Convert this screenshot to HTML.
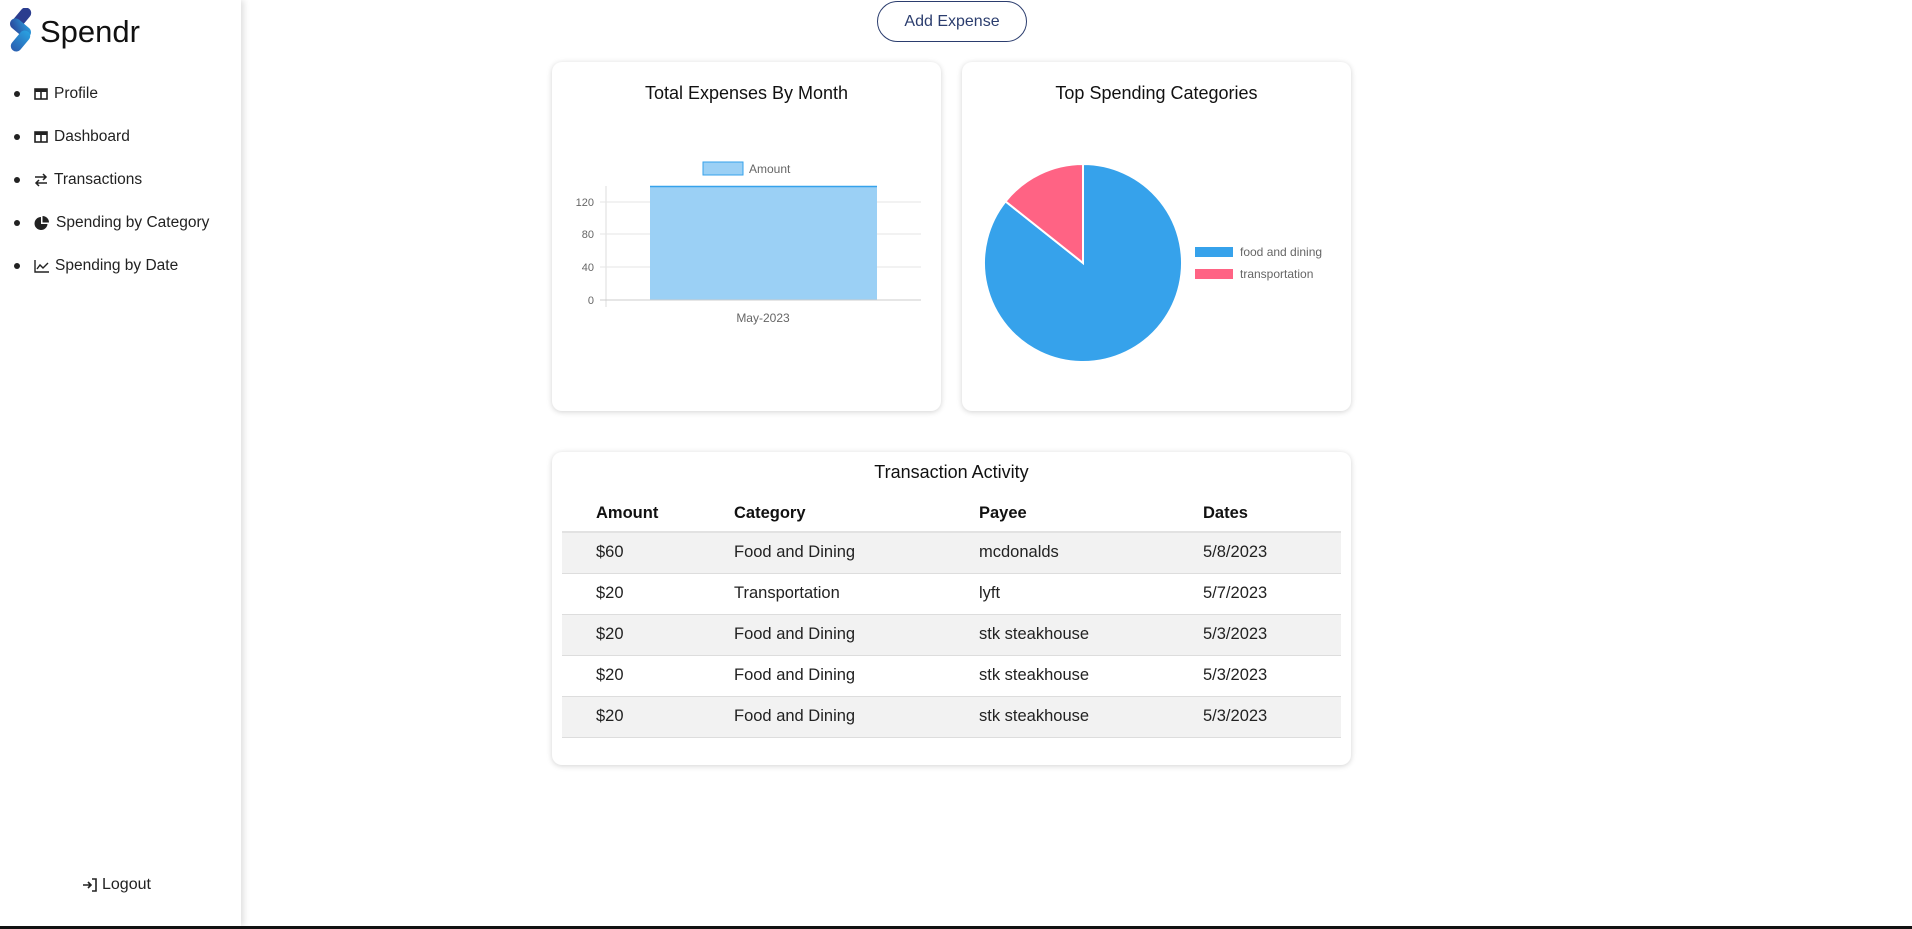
<!DOCTYPE html>
<html><head><meta charset="utf-8"><style>
*{box-sizing:border-box;margin:0;padding:0}
body{width:1912px;height:929px;position:relative;background:#fff;font-family:"Liberation Sans",sans-serif;color:#222;overflow:hidden}
.side{position:absolute;left:0;top:0;width:241px;height:926px;background:#fff;box-shadow:3px 0 6px rgba(0,0,0,0.12);z-index:2}
.abs{position:absolute}
.nav{position:absolute;left:14px;font-size:15.5px;color:#222;display:flex;align-items:center}
.nav .b{width:6px;height:6px;border-radius:50%;background:#222;margin-right:14px}
.nav svg{margin-right:6px}
.card{position:absolute;background:#fff;border-radius:10px;box-shadow:0 1px 6px rgba(0,0,0,0.18)}
.ct{position:absolute;left:0;right:0;text-align:center;font-size:18px;color:#111}
table{position:absolute;left:10px;top:43px;width:779px;border-collapse:collapse;font-size:16.5px}
th{text-align:left;font-weight:bold;height:37px;border-bottom:2px solid #e2e2e2;color:#111}
td{height:41px;border-bottom:1px solid #ddd;color:#222}
tr.g td{background:#f2f2f2}
th:first-child,td:first-child{padding-left:34px;width:172px}
.c2{width:245px}.c3{width:224px}
</style></head><body>
<div class="side">
  <svg class="abs" style="left:7px;top:8px" width="28" height="46" viewBox="0 0 28 46">
    <defs><linearGradient id="lg" x1="0" y1="0" x2="1" y2="1"><stop offset="0" stop-color="#2a3f94"/><stop offset="1" stop-color="#2aa0e0"/></linearGradient>
    <linearGradient id="lg2" x1="0" y1="0" x2="0" y2="1"><stop offset="0" stop-color="#2aa0e0"/><stop offset="1" stop-color="#2a5fb0"/></linearGradient></defs>
    <rect x="9" y="-2" width="11" height="24" rx="5.5" transform="rotate(40 14.5 10)" fill="#2b3d8f"/>
    <rect x="8" y="8" width="11" height="24" rx="5.5" transform="rotate(-50 13.5 20)" fill="url(#lg)"/>
    <rect x="8" y="21" width="11" height="24" rx="5.5" transform="rotate(40 13.5 33)" fill="url(#lg2)"/>
  </svg>
  <div class="abs" style="left:40px;top:14px;font-size:31px;color:#111">Spendr</div>
  <div class="nav" style="top:85px"><span class="b"></span><svg width="14" height="12" viewBox="0 0 14 12"><rect x="1" y="1" width="12" height="10" fill="none" stroke="#222" stroke-width="1.6"/><rect x="1" y="1" width="12" height="3" fill="#222"/><line x1="7" y1="1" x2="7" y2="11" stroke="#222" stroke-width="1.6"/></svg>Profile</div>
  <div class="nav" style="top:128px"><span class="b"></span><svg width="14" height="12" viewBox="0 0 14 12"><rect x="1" y="1" width="12" height="10" fill="none" stroke="#222" stroke-width="1.6"/><rect x="1" y="1" width="12" height="3" fill="#222"/><line x1="7" y1="1" x2="7" y2="11" stroke="#222" stroke-width="1.6"/></svg>Dashboard</div>
  <div class="nav" style="top:171px"><span class="b"></span><svg width="14" height="14" viewBox="0 0 14 14" fill="none" stroke="#222" stroke-width="1.5"><path d="M1 4h11M9 1l3 3-3 3M13 10H2M5 7l-3 3 3 3"/></svg>Transactions</div>
  <div class="nav" style="top:214px"><span class="b"></span><svg width="16" height="15" viewBox="0 0 16 15"><path d="M7 1A6.5 6.5 0 1 0 13.5 8H7z" fill="#222"/><path d="M8.5 0v6.5H15A6.5 6.5 0 0 0 8.5 0z" fill="#222"/></svg>Spending by Category</div>
  <div class="nav" style="top:257px"><span class="b"></span><svg width="15" height="13" viewBox="0 0 15 13" fill="none" stroke="#222" stroke-width="1.4"><path d="M1 0v12h14M3 9l3-4 3 3 5-5"/></svg>Spending by Date</div>
  <div class="abs" style="left:82px;top:876px;font-size:16px;display:flex;align-items:center"><svg width="16" height="14" viewBox="0 0 16 14" fill="none" stroke="#222" stroke-width="1.6" style="margin-right:4px"><path d="M1 7h8M6 4l3 3-3 3M10 1h4v12h-4"/></svg>Logout</div>
</div>
<div class="abs" style="left:0;top:926px;width:1912px;height:3px;background:#111;z-index:3"></div>

<div class="abs" style="left:877px;top:1px;width:150px;height:41px;border:1.5px solid #2b3d6e;border-radius:21px;text-align:center;line-height:40px;font-size:16px;color:#2b3d6e">Add Expense</div>

<div class="card" style="left:552px;top:62px;width:389px;height:349px">
  <div class="ct" style="top:21px">Total Expenses By Month</div>
  <svg class="abs" style="left:0;top:0" width="389" height="349" font-family="Liberation Sans, sans-serif" font-size="11" fill="#666">
    <rect x="151" y="100" width="40" height="13" fill="#9bd0f5" stroke="#36a2eb" stroke-width="1"/>
    <text x="197" y="111" font-size="12">Amount</text>
    <line x1="54" y1="124" x2="54" y2="245" stroke="#ddd"/>
    <line x1="48" y1="140" x2="369" y2="140" stroke="#e5e5e5"/>
    <line x1="48" y1="172" x2="369" y2="172" stroke="#e5e5e5"/>
    <line x1="48" y1="205" x2="369" y2="205" stroke="#e5e5e5"/>
    <rect x="98" y="124" width="227" height="114" fill="#9bd0f5"/>
    <line x1="98" y1="124.5" x2="325" y2="124.5" stroke="#36a2eb" stroke-width="1.5"/>
    <line x1="48" y1="238" x2="369" y2="238" stroke="#ccc"/>
    <text x="42" y="144" text-anchor="end">120</text>
    <text x="42" y="176" text-anchor="end">80</text>
    <text x="42" y="209" text-anchor="end">40</text>
    <text x="42" y="242" text-anchor="end">0</text>
    <text x="211" y="260" text-anchor="middle" font-size="12">May-2023</text>
  </svg>
</div>

<div class="card" style="left:962px;top:62px;width:389px;height:349px">
  <div class="ct" style="top:21px">Top Spending Categories</div>
  <svg class="abs" style="left:0;top:0" width="389" height="349" font-family="Liberation Sans, sans-serif" font-size="12" fill="#666">
    <path d="M121 201 L121 102 A99 99 0 1 1 43.5 139.4 Z" fill="#36a2eb" stroke="#fff" stroke-width="2"/>
    <path d="M121 201 L43.5 139.4 A99 99 0 0 1 121 102 Z" fill="#ff6384" stroke="#fff" stroke-width="2"/>
    <rect x="233" y="185" width="38" height="10" fill="#36a2eb"/>
    <text x="278" y="194">food and dining</text>
    <rect x="233" y="207" width="38" height="10" fill="#ff6384"/>
    <text x="278" y="216">transportation</text>
  </svg>
</div>

<div class="card" style="left:552px;top:452px;width:799px;height:313px">
  <div class="ct" style="top:10px">Transaction Activity</div>
  <table>
    <tr><th>Amount</th><th class="c2">Category</th><th class="c3">Payee</th><th>Dates</th></tr>
    <tr class="g"><td>$60</td><td>Food and Dining</td><td>mcdonalds</td><td>5/8/2023</td></tr>
    <tr><td>$20</td><td>Transportation</td><td>lyft</td><td>5/7/2023</td></tr>
    <tr class="g"><td>$20</td><td>Food and Dining</td><td>stk steakhouse</td><td>5/3/2023</td></tr>
    <tr><td>$20</td><td>Food and Dining</td><td>stk steakhouse</td><td>5/3/2023</td></tr>
    <tr class="g"><td>$20</td><td>Food and Dining</td><td>stk steakhouse</td><td>5/3/2023</td></tr>
  </table>
</div>
</body></html>
